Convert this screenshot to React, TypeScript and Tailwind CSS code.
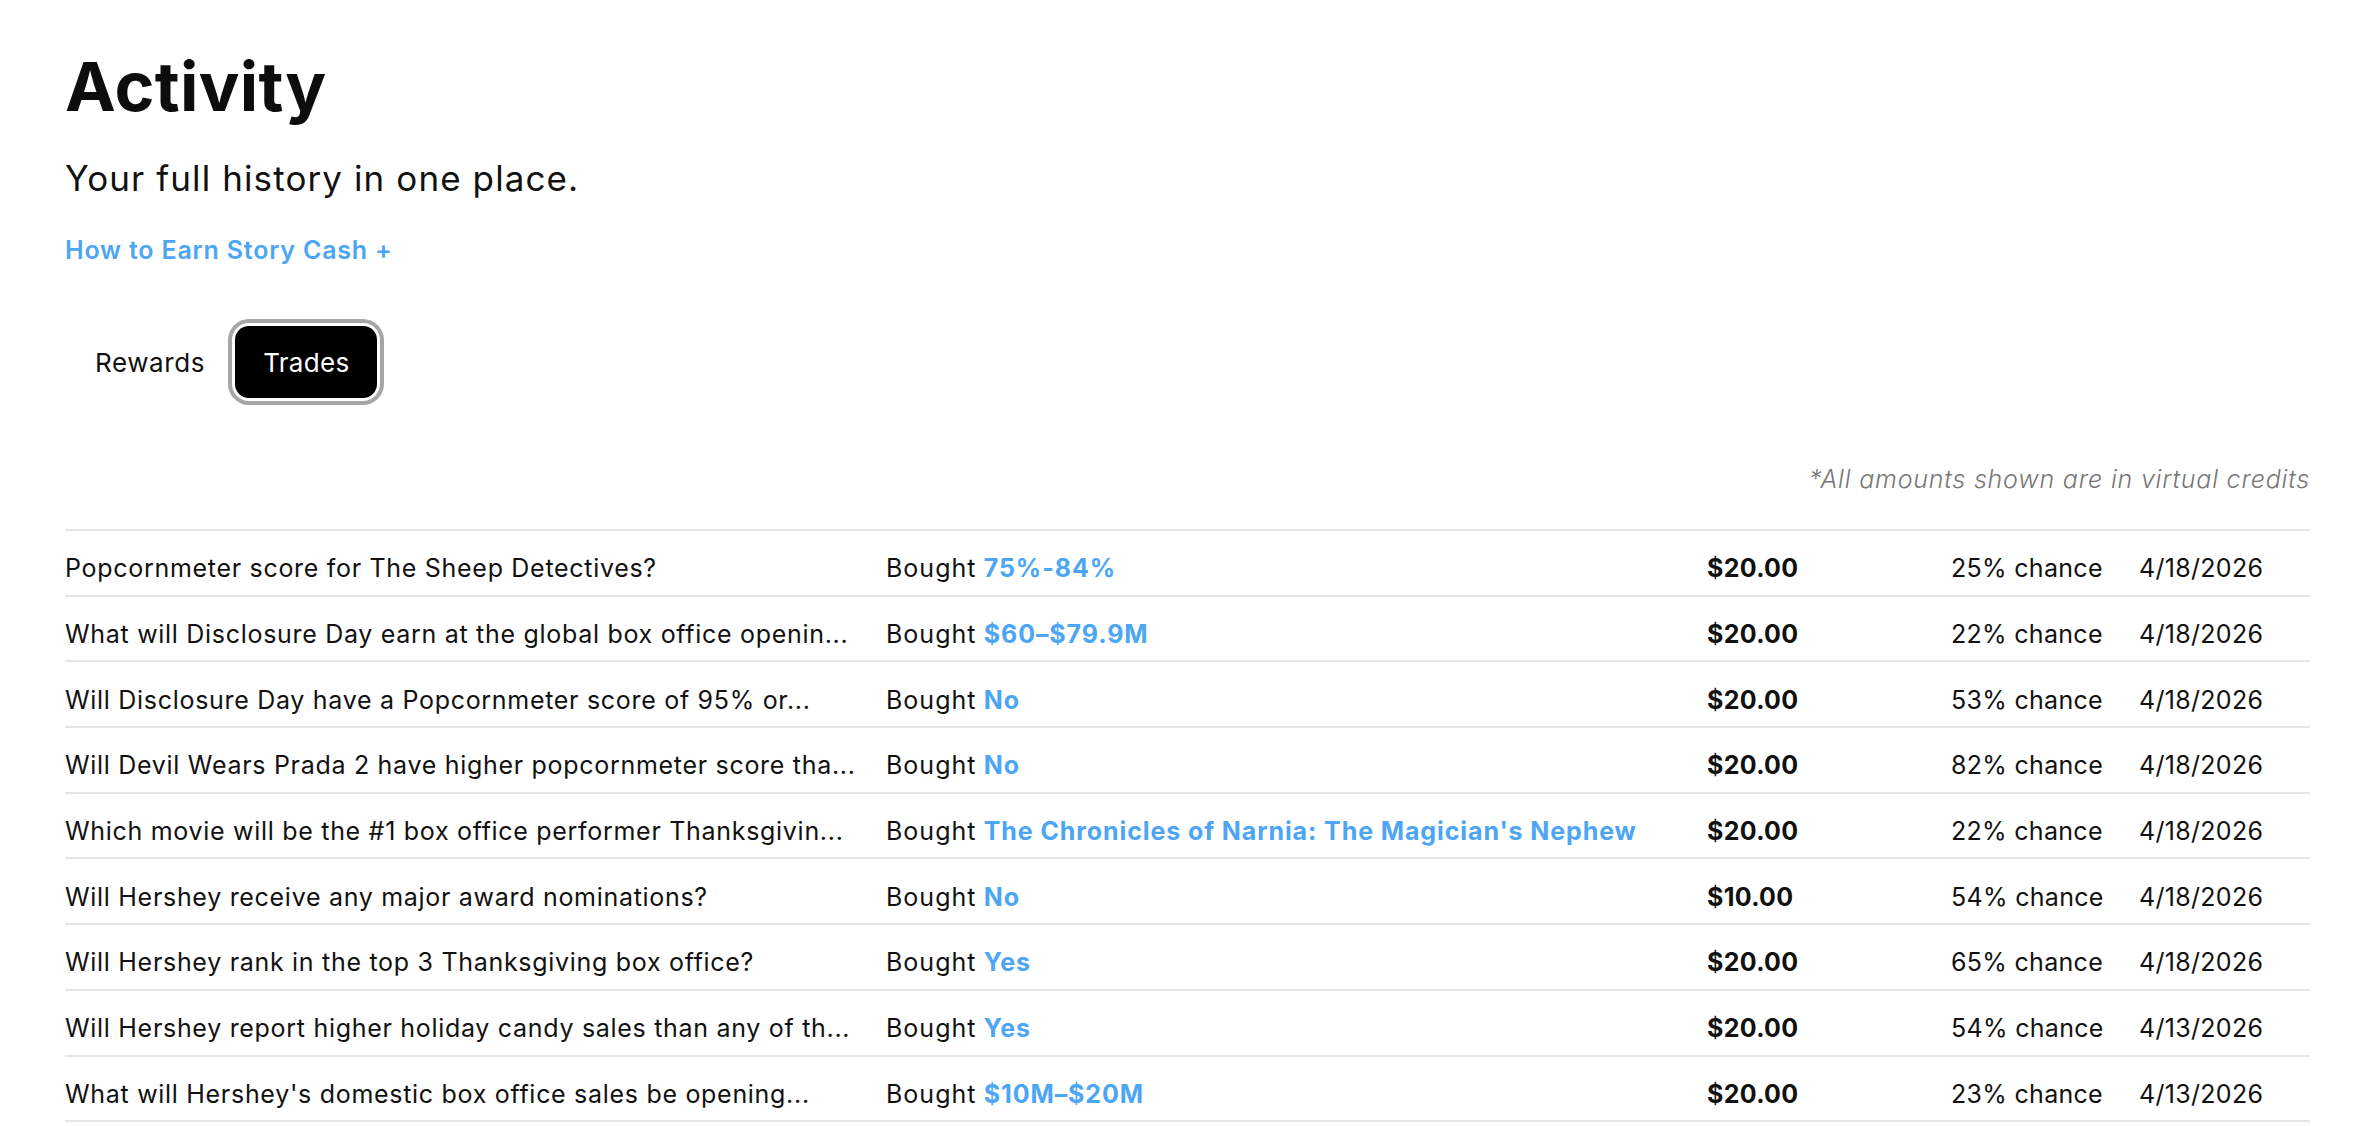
import React from 'react';

type Trade = {
    question: string;
    pick: string;
    amount: string;
    chance: string;
    date: string;
};

const trades: Trade[] = [
    { question: 'Popcornmeter score for The Sheep Detectives?', pick: '75%-84%', amount: '$20.00', chance: '25% chance', date: '4/18/2026' },
    { question: 'What will Disclosure Day earn at the global box office openin...', pick: '$60–$79.9M', amount: '$20.00', chance: '22% chance', date: '4/18/2026' },
    { question: 'Will Disclosure Day have a Popcornmeter score of 95% or...', pick: 'No', amount: '$20.00', chance: '53% chance', date: '4/18/2026' },
    { question: 'Will Devil Wears Prada 2 have higher popcornmeter score tha...', pick: 'No', amount: '$20.00', chance: '82% chance', date: '4/18/2026' },
    { question: 'Which movie will be the #1 box office performer Thanksgivin...', pick: "The Chronicles of Narnia: The Magician's Nephew", amount: '$20.00', chance: '22% chance', date: '4/18/2026' },
    { question: 'Will Hershey receive any major award nominations?', pick: 'No', amount: '$10.00', chance: '54% chance', date: '4/18/2026' },
    { question: 'Will Hershey rank in the top 3 Thanksgiving box office?', pick: 'Yes', amount: '$20.00', chance: '65% chance', date: '4/18/2026' },
    { question: 'Will Hershey report higher holiday candy sales than any of th...', pick: 'Yes', amount: '$20.00', chance: '54% chance', date: '4/13/2026' },
    { question: "What will Hershey's domestic box office sales be opening...", pick: '$10M–$20M', amount: '$20.00', chance: '23% chance', date: '4/13/2026' },
];

const TradeRow: React.FC<{ trade: Trade }> = ({ trade }) => (
    <div className="grid grid-cols-[821px_821px_244px_188px_1fr] items-center h-[65.7px] pt-[12px] border-b-2 border-[#e6e6e6] text-[25px] leading-none text-[#111] tracking-[0.3px]">
        <span className="whitespace-nowrap pr-[30px] tracking-[0.7px]">{trade.question}</span>
        <span className="whitespace-nowrap">
            <span className="tracking-[1px]">Bought</span>{' '}
            <span className="font-bold text-[#4ca5f5] tracking-[0.9px]">{trade.pick}</span>
        </span>
        <span className="font-bold">{trade.amount}</span>
        <span>{trade.chance}</span>
        <span>{trade.date}</span>
    </div>
);

export default function App() {
    return (
        <div className="min-h-screen bg-white pl-[65px] pr-[52px] pt-[52px] font-['Inter',sans-serif] text-[#111]">
            <h1 className="text-[68px] leading-none font-bold text-[#0d0d0d] tracking-[0.3px]">Activity</h1>
            <p className="mt-[41px] text-[35px] leading-none tracking-[1.1px]">Your full history in one place.</p>
            <a className="block mt-[42px] text-[25px] leading-none font-semibold text-[#4ca5f5] tracking-[0.8px]">
                How to Earn Story Cash +
            </a>

            {/* Tabs */}
            <div className="flex items-center mt-[63px]">
                <button className="h-[72px] px-[30px] text-[26px] text-[#111] tracking-[0.6px]">Rewards</button>
                <button className="h-[72px] px-[28px] text-[26px] text-white bg-black rounded-[14px] ring-4 ring-[#a6a6a6] ring-offset-[3px] ring-offset-white tracking-[0.3px]">
                    Trades
                </button>
            </div>

            <p className="mt-[69px] text-right text-[25px] leading-none italic font-light text-[#777] tracking-[0.8px]">
                *All amounts shown are in virtual credits
            </p>

            <div className="mt-[37px] border-t-2 border-[#e6e6e6]">
                {trades.map((t, i) => (
                    <TradeRow key={i} trade={t} />
                ))}
            </div>
        </div>
    );
}
